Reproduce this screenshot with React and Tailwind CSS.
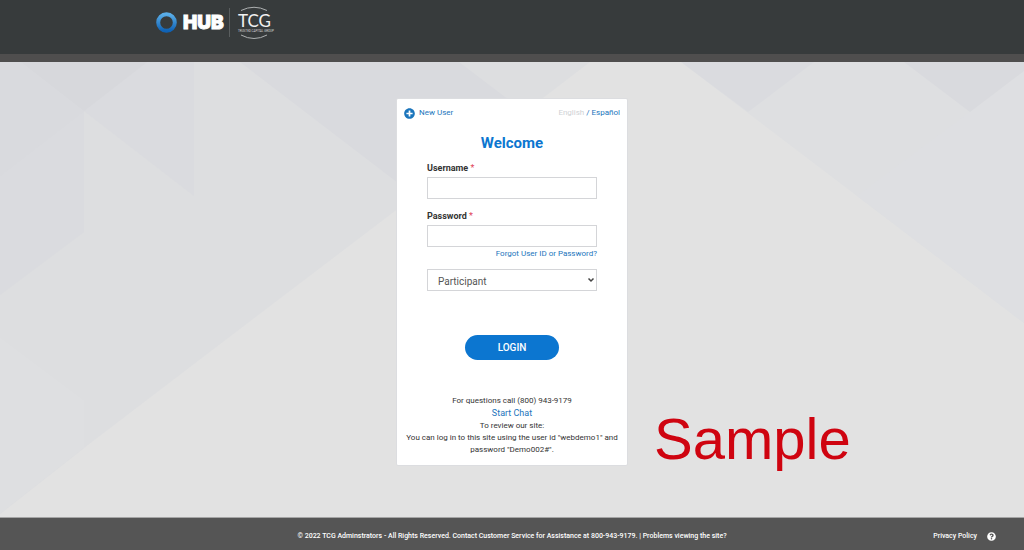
import { FaPlusCircle, FaQuestionCircle } from "react-icons/fa";

function Backdrop() {
  return (
    <svg
      aria-hidden="true"
      className="absolute inset-0 h-full w-full"
      viewBox="0 0 1024 455"
      preserveAspectRatio="none"
    >
      <rect width="1024" height="455" fill="#e2e2e2" />
      <polygon points="0,0 590,0 395,149 194,302 84,386 0,452" fill="#dddee0" />
      <polygon points="0,275 84,338 84,386 0,452" fill="#dedfe1" />
      <polygon points="0,0 84,0 84,170 0,233" fill="#dadbdf" />
      <polygon points="84,0 194,0 194,134 84,49" fill="#dadbdf" />
      <polygon points="21,0 147,0 84,49" fill="#d7d8dc" />
      <polygon points="0,0 21,0 84,49 0,114" fill="#d9dade" />
      <polygon points="240,0 459,0 525,50 415,134" fill="#d9dade" />
      <polygon points="681,0 1024,0 1024,261" fill="#dedfe1" />
      <polygon points="681,0 814,0 748,50" fill="#dadbdf" />
      <polygon points="857,134 970,50 1024,9 1024,261" fill="#dedfe2" />
      <polygon points="904,0 1024,0 1024,9 970,50" fill="#d9dade" />
    </svg>
  );
}

function Logo() {
  return (
    <svg
      role="img"
      aria-label="HUB TCG"
      className="h-10 w-32"
      viewBox="0 0 128 40"
    >
      <defs>
        <linearGradient id="ring" x1="0" y1="0" x2="0" y2="1">
          <stop offset="0" stopColor="#5aaee8" />
          <stop offset="1" stopColor="#0f62b5" />
        </linearGradient>
      </defs>
      <circle cx="16.500" cy="19.500" r="8.300" fill="none" stroke="url(#ring)" strokeWidth="4" />
      <text x="33" y="26" fill="#fff" stroke="#fff" strokeWidth="0.900" className="font-['Inter',sans-serif] text-[19px] font-black">
        HUB
      </text>
      <path d="M79.500 5V34" stroke="#5a5e5f" strokeWidth="1" />
      <path d="M91 7.500Q104 1 117 7.500" fill="none" stroke="#aeb1b2" strokeWidth="1" />
      <text x="88" y="24" fill="#f1f1f1" className="font-['Lato',sans-serif] text-[17px]">
        TCG
      </text>
      <text x="88" y="29" fill="#d8d8d8" className="font-['Roboto',sans-serif] text-[3px]">
        TRUSTED CAPITAL GROUP
      </text>
      <path d="M91 32Q104 39 117 32" fill="none" stroke="#aeb1b2" strokeWidth="1" />
    </svg>
  );
}

function Field({ id, label, type }) {
  return (
    <div>
      <label htmlFor={id} className="block text-[9px] leading-4 font-bold text-[#333]">
        {label} <span className="font-normal text-[#e0455a]">*</span>
      </label>
      <input
        id={id}
        type={type}
        className="mt-px block h-[22px] w-full border border-[#d4d5d8] bg-white px-2 text-[11px] text-[#444] outline-none"
      />
    </div>
  );
}

export default function App() {
  return (
    <div className="flex min-h-screen flex-col bg-[#e2e2e2] font-['Roboto',sans-serif]">
      <header className="border-b-8 border-[#4f4e4e] bg-[#373b3c] px-[150px] pt-[3px] pb-[11px]">
        <Logo />
      </header>

      <main className="relative flex flex-1 justify-center border-b border-[#a5a5a5] py-9">
        <Backdrop />
        <section className="relative flex w-[232px] flex-col self-start rounded-xs border border-[#dcdde0] bg-white px-[30px] pt-1 pb-[9px]">
          <div className="-mx-[23px] flex h-5 items-center justify-between text-[8px] text-[#1b75bc]">
            <a href="#new-user" className="flex items-center gap-1">
              <FaPlusCircle className="h-[11px] w-[11px]" />
              New User
            </a>
            <span>
              <span className="text-[#cfd2d5]">English</span> /{" "}
              <a href="#es">Español</a>
            </span>
          </div>

          <h1 className="mt-2 text-center text-[15px] leading-6 font-bold text-[#0c76d0]">
            Welcome
          </h1>

          <form className="mt-[5px] flex flex-col" onSubmit={(e) => e.preventDefault()}>
            <div className="flex flex-col gap-[9px]">
              <Field id="username" label="Username" type="text" />
              <Field id="password" label="Password" type="password" />
            </div>
            <a href="#forgot" className="mt-px self-end text-[8px] leading-3 text-[#1b75bc]">
              Forgot User ID or Password?
            </a>
            <div className="relative mt-[9px]">
              <select
                aria-label="Account type"
                className="block h-[22px] w-full appearance-none border border-[#d4d5d8] bg-white pt-[2px] pl-[10px] text-[10px] text-[#555]"
              >
                <option>Participant</option>
              </select>
              <svg
                aria-hidden="true"
                className="pointer-events-none absolute top-2 right-[2px] h-[6px] w-2"
                viewBox="0 0 8 6"
              >
                <path d="M1.500 1.500L4 4L6.500 1.500" fill="none" stroke="#444" strokeWidth="1.500" />
              </svg>
            </div>
            <button
              type="submit"
              className="mt-11 h-[25px] w-[94px] self-center rounded-full bg-[#0c76d0] text-[10px] font-medium text-white"
            >
              LOGIN
            </button>
          </form>

          <div className="-mx-6 mt-[35px] text-center text-[8px] leading-3 text-[#333]">
            <p>For questions call (800) 943-9179</p>
            <p>
              <a href="#chat" className="text-[9px] text-[#1b75bc]">Start Chat</a>
            </p>
            <p>To review our site:</p>
            <p>You can log in to this site using the user id "webdemo1" and password "Demo002#".</p>
          </div>
        </section>
        <p className="absolute bottom-11 left-[calc(50%+142px)] font-['Liberation_Sans',sans-serif] text-[58px] leading-[68px] text-[#cf0410]">
          Sample
        </p>
      </main>

      <footer className="relative flex h-8 items-center justify-center bg-[#555] pt-1 text-[7px] font-medium text-white">
        <p>
          © 2022 TCG Adminstrators - All Rights Reserved. Contact Customer Service for Assistance at 800-943-9179. |{" "}
          <a href="#problems">Problems viewing the site?</a>
        </p>
        <div className="absolute right-7 flex items-center gap-[10px]">
          <a href="#privacy">Privacy Policy</a>
          <a href="#help" aria-label="Help">
            <FaQuestionCircle className="h-[9px] w-[9px]" />
          </a>
        </div>
      </footer>
    </div>
  );
}
